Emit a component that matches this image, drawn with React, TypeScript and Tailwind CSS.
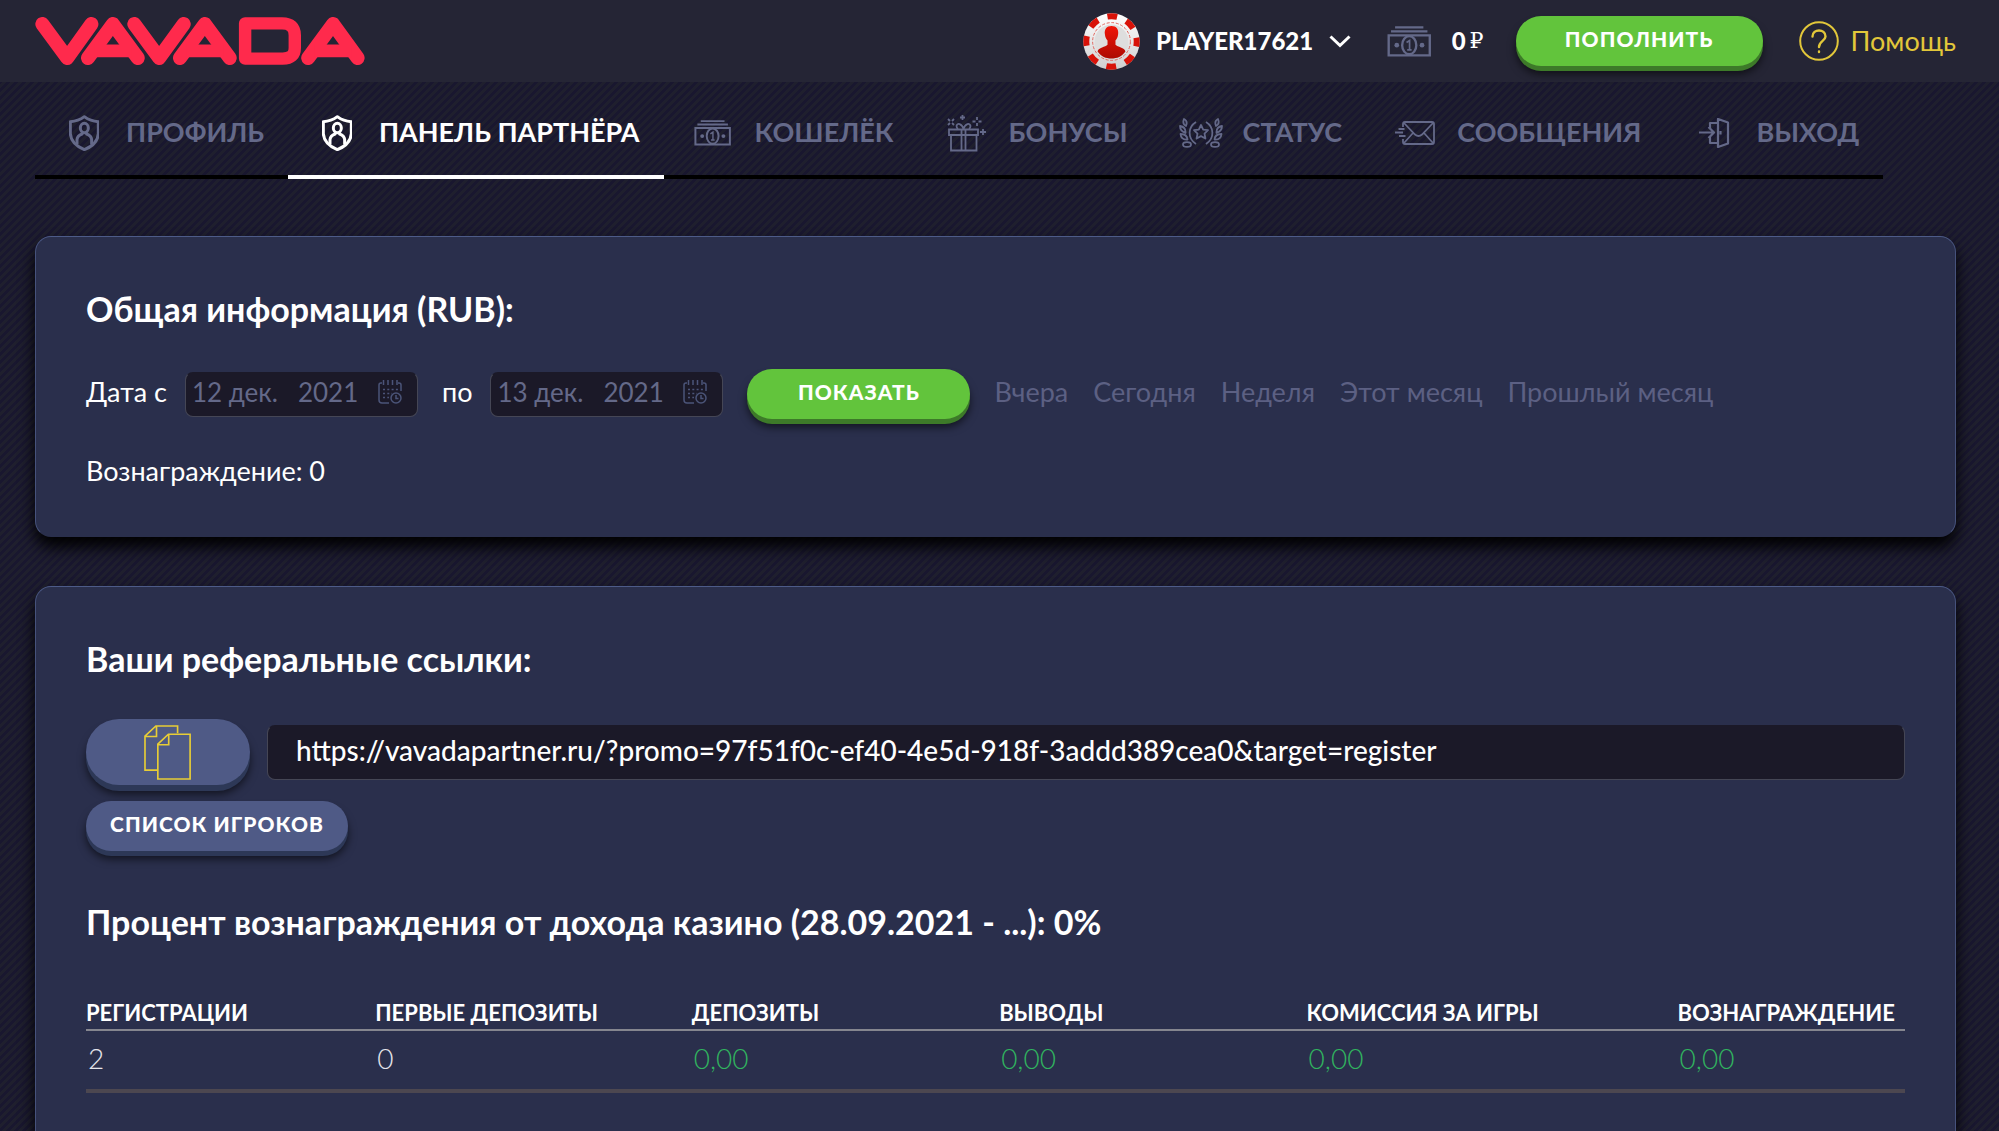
import React, { useState } from 'react';
import clsx from 'clsx';

type IconProps = { className?: string };

const Logo: React.FC<IconProps> = ({ className }) => (
  <svg viewBox="104 52 982 143" className={className} fill="none" stroke="#ff2a4c" strokeWidth="42" strokeLinecap="round" strokeLinejoin="round" role="img" aria-label="VAVADA">
    <path d="M126 73 200 174 272 73M400 73 474 174 547 73" />
    <path d="M262 174 336 73 410 174M536 174 610 73 684 174M918 174 992 73 1065 174" />
    <path d="M280 153H392M554 153H666M936 153H1048" strokeWidth="38" strokeLinecap="butt" />
    <path d="M730 71H840Q878 71 878 106V144Q878 176 842 176H730Z" strokeWidth="37" />
  </svg>
);

const Chip: React.FC<IconProps> = ({ className }) => (
  <svg viewBox="-86 -86 172 172" className={className} aria-hidden="true">
    <defs>
      <linearGradient id="chipRim" x1="0" y1="0" x2="0" y2="1">
        <stop offset="0" stopColor="#ffffff" />
        <stop offset="1" stopColor="#cfcfcf" />
      </linearGradient>
      <linearGradient id="chipRed" x1="0" y1="0" x2="0" y2="1">
        <stop offset="0" stopColor="#f01508" />
        <stop offset="1" stopColor="#ad0a02" />
      </linearGradient>
    </defs>
    <circle r="85" fill="url(#chipRim)" />
    <circle r="76" fill="none" stroke="#d81208" strokeWidth="18" strokeDasharray="30 29.7" strokeDashoffset="15" />
    <circle r="57" fill="none" stroke="#e0675f" strokeWidth="3" strokeDasharray="9 5" />
    <circle r="51" fill="#dedede" />
    <path d="M0-47C15-47 22-37 20-22C19-12 15-7 12-3V10C18 17 40 18 42 30C31 46 17 51 0 51S-31 46-42 30C-40 18-18 17-12 10V-3C-15-7-19-12-20-22C-22-37-15-47 0-47Z" fill="url(#chipRed)" />
  </svg>
);

const CashIcon: React.FC<IconProps> = ({ className }) => (
  <svg viewBox="0 0 132 92" className={className} fill="none" stroke="currentColor" strokeWidth="7" aria-hidden="true">
    <path d="M24 4H108M12 16H120M5 28H127V87H5Z" />
    <ellipse cx="66" cy="57" rx="21" ry="27" />
    <path d="M58 49 67 43V71M60 71H73" strokeWidth="5" />
    <circle cx="29" cy="57" r="7" fill="currentColor" stroke="none" />
    <circle cx="104" cy="57" r="7" fill="currentColor" stroke="none" />
  </svg>
);

const ShieldIcon: React.FC<IconProps> = ({ className }) => (
  <svg viewBox="0 0 92 108" className={className} fill="none" stroke="currentColor" strokeWidth="9" strokeLinejoin="round" aria-hidden="true">
    <path d="M46 5Q28 19 4 20V56Q6 88 46 104Q86 88 88 56V20Q64 19 46 5Z" />
    <ellipse cx="46" cy="39" rx="12" ry="14" />
    <path d="M24 88V74Q25 62 39 57L42 51M68 88V74Q67 62 53 57L50 51" />
  </svg>
);

const GiftIcon: React.FC<IconProps> = ({ className }) => (
  <svg viewBox="0 0 40 38" className={className} fill="none" stroke="currentColor" strokeWidth="1.8" aria-hidden="true">
    <path d="M2 15.5H31V21H2ZM4 21H29.500V36.500H4ZM14.500 15.500V36.500M18.500 15.500V36.500" />
    <path d="M16.500 15C15 9.500 10 8.500 9.500 12Q9.500 14 11 15M16.500 15C18 9.500 23 8.500 23.500 12Q23.500 14 22 15" />
    <path d="M1 5 3 7M7 5 5 7M1 11 3 9M7 11 5 9M15.500 1V6M13 3.500H18M30 3V6M30 9V12M25.500 7.500H28.500M31.500 7.500H34.500M36 15V21M33 18H39" />
  </svg>
);

const LaurelIcon: React.FC<IconProps> = ({ className }) => (
  <svg viewBox="0 0 44 30" className={className} fill="none" stroke="currentColor" strokeWidth="1.8" strokeLinejoin="round" aria-hidden="true">
    <path d="M22 7 24.200 11.600 29 12.200 25.500 15.600 26.400 20.500 22 18.100 17.600 20.500 18.500 15.600 15 12.200 19.800 11.600Z" />
    <path d="M17 4C9 9 8 20 17 26M27 4C35 9 36 20 27 26" />
    <path d="M5 1Q9 3 7 8Q3 6 5 1ZM1 8Q7 9 6.500 15Q1 13 1 8ZM1.500 16Q8 16 8.500 21.500Q2 22 1.500 16Z" />
    <path d="M39 1Q35 3 37 8Q41 6 39 1ZM43 8Q37 9 37.500 15Q43 13 43 8ZM42.500 16Q36 16 35.500 21.500Q42 22 42.500 16Z" />
    <ellipse cx="8" cy="26.500" rx="4" ry="2.400" />
    <ellipse cx="36" cy="26.500" rx="4" ry="2.400" />
  </svg>
);

const MailIcon: React.FC<IconProps> = ({ className }) => (
  <svg viewBox="0 0 40 24" className={className} fill="none" stroke="currentColor" strokeWidth="1.8" aria-hidden="true">
    <path d="M8 6V3Q8 1 10 1H37Q39 1 39 3V21Q39 23 37 23H10Q8 23 8 21V18" />
    <path d="M9 2 20 13.500Q23.500 16.500 27 13.500L38 2M9 22 18 12M38 22 29 12M3.500 8H9.500M0 11.500H8M4 15H10.500" />
  </svg>
);

const ExitIcon: React.FC<IconProps> = ({ className }) => (
  <svg viewBox="0 0 31 30" className={className} fill="none" stroke="currentColor" strokeWidth="2.2" strokeLinejoin="round" aria-hidden="true">
    <path d="M11 10V5H19M11 19V25H19M19 1 29 4.500V25.500L19 29ZM0 14.500H15M9.500 9 15 14.500 9.500 20M21.500 13V16.500" />
  </svg>
);

const CalendarIcon: React.FC<IconProps> = ({ className }) => (
  <svg viewBox="0 0 24 24" className={className} fill="none" stroke="currentColor" strokeWidth="1.5" aria-hidden="true">
    <path d="M4 3H3Q1 3 1 5V20Q1 23 4 23H11M20 3H21Q23 3 23 5V11M5.500 0V5M10 0V5M14.500 0V5M19 0V5" />
    <path d="M5 9.500H20M5 13.500H14M5 17.500H11" strokeDasharray="2 2.300" strokeWidth="1.600" />
    <circle cx="18" cy="18" r="5" />
    <path d="M18 15V18.500H20.500" />
  </svg>
);

const CopyIcon: React.FC<IconProps> = ({ className }) => (
  <svg viewBox="0 0 143 167" className={className} fill="none" stroke="#e8cd36" strokeWidth="5" aria-hidden="true">
    <path d="M102 25V3H36L3 34V137H40M38 4V35H4" />
    <path d="M74 28H140V164H42V58ZM75 29V60H43" />
  </svg>
);

const HelpIcon: React.FC<IconProps> = ({ className }) => (
  <svg viewBox="0 0 40 40" className={className} fill="none" stroke="currentColor" strokeWidth="2" strokeLinecap="round" aria-hidden="true">
    <circle cx="20" cy="20" r="18.800" />
    <path d="M13.500 15.500C13.500 7.500 26.500 7.500 26.500 15.500C26.500 20 20 20 20 26M20 30.500V31" strokeWidth="2.400" />
  </svg>
);

const navItems = [
  { label: 'ПРОФИЛЬ', icon: <ShieldIcon className="h-9" /> },
  { label: 'ПАНЕЛЬ ПАРТНЁРА', icon: <ShieldIcon className="h-9" />, active: true },
  { label: 'КОШЕЛЁК', icon: <CashIcon className="h-[26px]" /> },
  { label: 'БОНУСЫ', icon: <GiftIcon className="h-[38px]" /> },
  { label: 'СТАТУС', icon: <LaurelIcon className="h-[30px]" /> },
  { label: 'СООБЩЕНИЯ', icon: <MailIcon className="h-6" /> },
  { label: 'ВЫХОД', icon: <ExitIcon className="h-[30px]" /> },
];

const periods = ['Вчера', 'Сегодня', 'Неделя', 'Этот месяц', 'Прошлый месяц'];

const columns = [
  { title: 'РЕГИСТРАЦИИ', value: '2', width: 'w-[15.9%]' },
  { title: 'ПЕРВЫЕ ДЕПОЗИТЫ', value: '0', width: 'w-[17.4%]' },
  { title: 'ДЕПОЗИТЫ', value: '0,00', width: 'w-[16.9%]', money: true },
  { title: 'ВЫВОДЫ', value: '0,00', width: 'w-[16.9%]', money: true },
  { title: 'КОМИССИЯ ЗА ИГРЫ', value: '0,00', width: 'w-[20.4%]', money: true },
  { title: 'ВОЗНАГРАЖДЕНИЕ', value: '0,00', width: 'w-[12.5%]', money: true },
];

const greenButton =
  'h-[50px] rounded-full bg-[#62c43c] text-[21px] font-black tracking-wider text-white pb-1 shadow-[0_5px_0_#3d7a29,0_8px_8px_rgba(0,0,0,0.6)]';
const slateButton =
  'rounded-full bg-[#4f5a86] text-[21px] font-black tracking-wider text-white';
const darkField =
  'rounded-lg border border-t-transparent border-[#454655] bg-[#1b1928] outline-none';
const panel =
  'border border-[#46527c] border-t-[#4d5b88] bg-[#2a2f4c] px-[50px] pt-[52px]';

const DateField: React.FC<{ id: string; label: string; initial: string }> = ({ id, label, initial }) => {
  const [value, setValue] = useState(initial);
  return (
    <div className="flex items-center gap-[18px]">
      <label htmlFor={id} className="pb-1">{label}</label>
      <div className="relative">
        <input
          id={id}
          type="text"
          value={value}
          onChange={(e) => setValue(e.target.value)}
          className={clsx(darkField, 'block h-[45px] w-[233px] pl-[6px] pb-1 text-[26px] text-[#646989]')}
        />
        <CalendarIcon className="absolute right-4 top-2 h-6 w-6 text-[#4b5478]" />
      </div>
    </div>
  );
};

const App: React.FC = () => {
  return (
    <div className="flex min-h-screen flex-col bg-[linear-gradient(135deg,#19172f_25%,#1f1f2e_25%,#1f1f2e_50%,#19172f_50%,#19172f_75%,#1f1f2e_75%)] bg-[length:8px_8px] font-['Lato','Noto_Sans',sans-serif] text-[27px] leading-10 text-white">
      {/* Header */}
      <header className="flex h-[82px] items-center bg-[#262636]/95 pl-[35px] pr-[43px]">
        <a href="#home">
          <Logo className="h-12" />
        </a>
        <div className="ml-auto flex items-center whitespace-nowrap">
          <button type="button" className="flex items-center gap-4 text-[24px] font-black">
            <Chip className="h-[57px] w-[57px]" />
            PLAYER17621
            <svg viewBox="0 0 22 13" className="w-[22px]" fill="none" stroke="currentColor" strokeWidth="3" aria-hidden="true">
              <path d="M1.500 1.500 11 10.500 20.500 1.500" />
            </svg>
          </button>
          <CashIcon className="ml-9 h-[31px] text-[#646989]" />
          <span className="ml-5 flex gap-1 text-[24px] font-black">
            0 <span className="font-['DejaVu_Serif',serif] text-[22px] font-normal leading-10">₽</span>
          </span>
          <button type="button" className={clsx(greenButton, 'ml-8 w-[247px]')}>
            ПОПОЛНИТЬ
          </button>
          <a href="#help" className="ml-9 flex items-center gap-3 text-[#e2c73a]">
            <HelpIcon className="h-10 w-10" />
            Помощь
          </a>
        </div>
      </header>

      <div className="flex flex-1 flex-col pl-[35px] pr-[43px]">
        {/* Navigation */}
        <nav className="flex whitespace-nowrap font-bold">
          {navItems.map((item) => (
            <a
              key={item.label}
              href="#nav"
              className={clsx(
                'flex h-[97px] items-center gap-[18px] border-b-4 pl-[25px] pr-6 pt-2',
                item.active ? 'border-white text-white' : 'border-black text-[#646989]'
              )}
            >
              <span className="flex w-12 justify-center">{item.icon}</span>
              <span className="pb-[2px]">{item.label}</span>
            </a>
          ))}
        </nav>

        {/* Summary */}
        <section className={clsx(panel, 'mt-[57px] rounded-2xl border-b-transparent pb-[45px] shadow-[0_10px_16px_#000]')}>
          <h2 className="text-[34px] font-bold">Общая информация (RUB):</h2>
          <form className="mt-10 flex items-center gap-6 whitespace-nowrap" onSubmit={(e) => e.preventDefault()}>
            <DateField id="date-from" label="Дата с" initial="12 дек.   2021" />
            <DateField id="date-to" label="по" initial="13 дек.   2021" />
            <button type="submit" className={clsx(greenButton, 'w-[223px]')}>
              ПОКАЗАТЬ
            </button>
            <div className="flex gap-[25px] pb-1 text-[#5c6083]">
              {periods.map((period) => (
                <a key={period} href="#period">{period}</a>
              ))}
            </div>
          </form>
          <p className="mt-8">Вознаграждение: 0</p>
        </section>

        {/* Referral links */}
        <section className={clsx(panel, 'mt-[49px] flex-1 rounded-t-2xl border-b-0 shadow-[0_10px_16px_#000]')}>
          <h2 className="text-[34px] font-bold">Ваши реферальные ссылки:</h2>
          <div className="mt-10 flex items-center gap-[17px]">
            <button
              type="button"
              aria-label="Скопировать"
              className={clsx(slateButton, 'flex h-[66px] w-[164px] items-center justify-center shadow-[0_6px_0_#2d3857,0_9px_8px_rgba(0,0,0,0.6)]')}
            >
              <CopyIcon className="h-[55px]" />
            </button>
            <input
              type="text"
              readOnly
              aria-label="Реферальная ссылка"
              value="https://vavadapartner.ru/?promo=97f51f0c-ef40-4e5d-918f-3addd389cea0&target=register"
              className={clsx(darkField, 'h-[55px] flex-1 px-7 pb-1 text-[28px] font-medium')}
            />
          </div>
          <button type="button" className={clsx(slateButton, 'mt-4 h-[50px] px-6 pb-1 shadow-[0_5px_0_#2d3857,0_8px_8px_rgba(0,0,0,0.6)]')}>
            СПИСОК ИГРОКОВ
          </button>

          <h2 className="mt-[51px] text-[34px] font-bold">
            Процент вознаграждения от дохода казино (28.09.2021 - ...): 0%
          </h2>
          <table className="mt-[55px] w-full table-fixed border-collapse text-left">
            <thead>
              <tr className="border-b-2 border-[#85868f] text-[22px] leading-8">
                {columns.map((col) => (
                  <th key={col.title} className={clsx(col.width, 'whitespace-nowrap font-bold')}>{col.title}</th>
                ))}
              </tr>
            </thead>
            <tbody>
              <tr className="border-b-4 border-[#4c4750] text-[28px] font-light">
                {columns.map((col) => (
                  <td key={col.title} className={clsx('h-[61px] pb-1 pl-[2px]', col.money ? 'text-[#31b35f]' : 'text-[#e4e4ea]')}>
                    {col.value}
                  </td>
                ))}
              </tr>
            </tbody>
          </table>
        </section>
      </div>
    </div>
  );
};

export default App;
